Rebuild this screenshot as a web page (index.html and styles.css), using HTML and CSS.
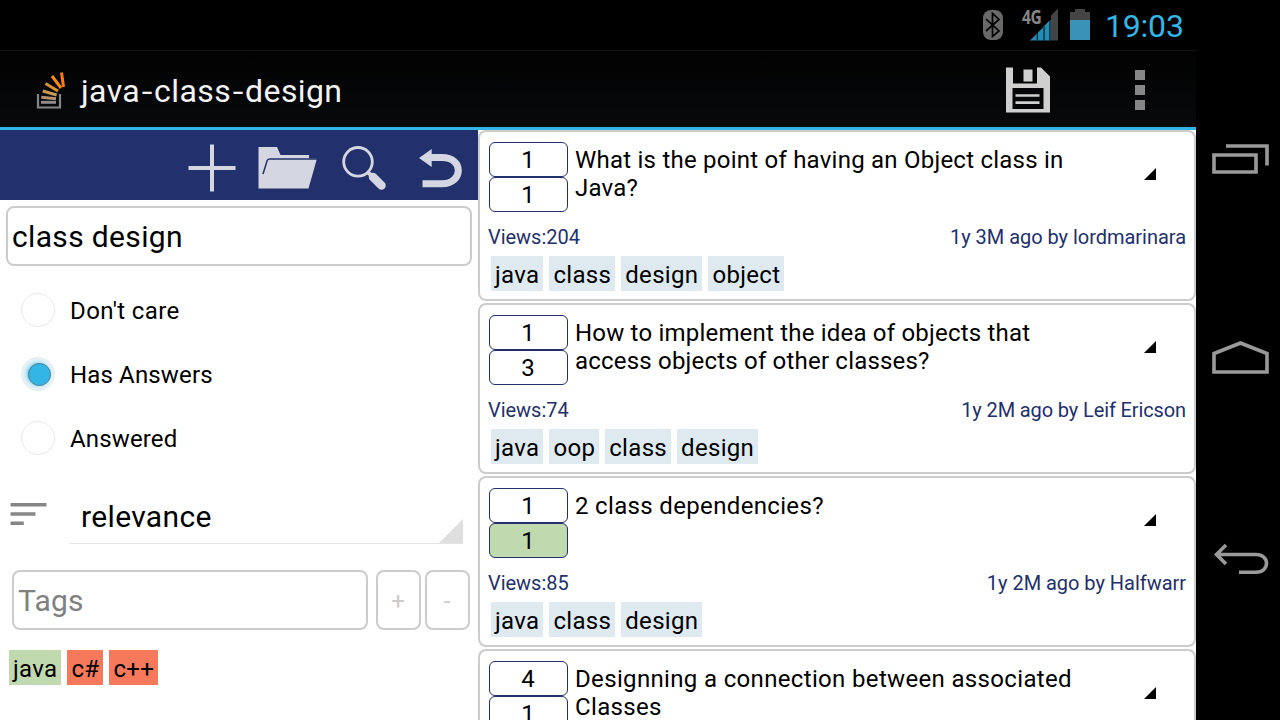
FILE: index.html
```
<!DOCTYPE html>
<html lang="en">
<head>
<meta charset="utf-8">
<title>java-class-design</title>
<link rel="stylesheet" href="styles.css">
</head>
<body>
<div class="device">
  <div class="screen">
    <div class="status-bar">
      <svg class="status-icons" width="112" height="50" viewBox="980 0 112 50">
        <rect x="983" y="10" width="20" height="30" rx="8" fill="#696969"/>
        <path d="M986 19l13 12-6.500 5.500v-23l6.500 6-13 11.500" fill="none" stroke="#000" stroke-width="1.700"/>
        <path d="M1030 40.500l7-7v7zM1038 40.500v-8l5-5v13zM1044.500 40.500v-15l5-5v20z" fill="#258bb5"/>
        <path d="M1051 40.500v-25l7-7v32z" fill="#444"/>
        <path d="M1037 33v7.500M1043.500 26v14.500M1050.500 20v20.500" stroke="#174a60" stroke-width="1"/>
        <path d="M1070 20v-8h5V9h10v3h5v8z" fill="#444"/>
        <rect x="1070" y="20" width="20" height="20" fill="#3993b8"/>
      </svg>
      <span class="network">4G</span>
      <span class="clock">19:03</span>
    </div>
    <header class="action-bar">
      <svg class="logo" width="30" height="40" viewBox="36 70 30 40">
        <path d="M38 94v13.500h22V94" fill="none" stroke="#858588" stroke-width="2.200"/>
        <g fill="none" stroke-width="3">
          <path d="M41 102.300h15" stroke="#8c8b8b"/>
          <path d="M41.300 97.300l14.700 1.500" stroke="#b19370"/>
          <path d="M42.700 91l14 4" stroke="#c69a50"/>
          <path d="M45.500 83.500l12.500 7.500" stroke="#dc922c"/>
          <path d="M52 76l9 12" stroke="#f58b13"/>
          <path d="M61.500 72.500l2 14.500" stroke="#ff7a15"/>
        </g>
      </svg>
      <h1 class="title">java<span class="hyphen">-</span>class<span class="hyphen">-</span>design</h1>
      <svg class="save" width="44" height="46" viewBox="1006 67 44 46">
        <path d="M1006 67.500h7v16h24v-16h4l9 9v36h-44z" fill="#cfcfcf"/>
        <rect x="1023.500" y="69.500" width="9" height="12" fill="#cfcfcf"/>
        <path d="M1012.500 88h31v21h-31z" fill="#050607"/>
        <path d="M1015.500 95.500h24M1015.500 102.700h24" stroke="#cfcfcf" stroke-width="2.700"/>
      </svg>
      <svg class="overflow" width="10" height="40" viewBox="0 0 10 40">
        <path d="M0 0h10v10H0zM0 15h10v10H0zM0 30h10v10H0z" fill="#868686"/>
      </svg>
    </header>
    <main class="content">
      <section class="search">
        <div class="toolbar">
          <svg width="290" height="70" viewBox="188 130 290 70">
            <path d="M188.500 168h47M212 144.500v47" stroke="#d4d6e2" stroke-width="4"/>
            <path d="M258.500 147h18.500l3.500 8h28.500v3.500h8l-8.500 30h-50z" fill="#d4d6e2"/>
            <path d="M263 174l4-13q.6-2 2.500-2h47.500" fill="none" stroke="#22306b" stroke-width="1.500"/>
            <circle cx="358" cy="161.800" r="14.300" fill="none" stroke="#d4d6e2" stroke-width="2.800"/>
            <path d="M367 171.500l5 4.500" stroke="#d4d6e2" stroke-width="4"/>
            <path d="M373 177l8.500 8.500" stroke="#d4d6e2" stroke-width="8.500" stroke-linecap="round"/>
            <path d="M422.500 183.700h19.500c21.300 0 22.300-26.200 0-26.200h-12" fill="none" stroke="#d4d6e2" stroke-width="7"/>
            <path d="M419 158l12.700-9v18z" fill="#d4d6e2"/>
          </svg>
        </div>
        <div class="query">class design</div>
        <div class="radios">
          <div class="radio"><span class="dot"></span><span class="label airy">Don't care</span></div>
          <div class="radio"><span class="dot checked"></span><span class="label">Has Answers</span></div>
          <div class="radio"><span class="dot"></span><span class="label">Answered</span></div>
        </div>
        <div class="sort">
          <svg class="sort-icon" width="38" height="25" viewBox="9 501 38 25">
            <path d="M10.500 504.700h36M10.500 514h25M10.500 523.300h13.300" stroke="#868686" stroke-width="3.600"/>
          </svg>
          <div class="spinner"><span>relevance</span><i class="spinner-corner"></i></div>
        </div>
        <div class="tag-form">
          <div class="tag-input">Tags</div>
          <div class="tag-button">+</div>
          <div class="tag-button">-</div>
        </div>
        <div class="tags picked">
          <span class="tag included">java</span><span class="tag excluded">c#</span><span class="tag excluded">c++</span>
        </div>
      </section>
      <section class="results">
        <article class="card">
          <div class="card-top">
            <div class="counts"><span class="count">1</span><span class="count">1</span></div>
            <h2 class="question">What is the point of having an Object class in<br>Java?</h2>
            <i class="corner"></i>
          </div>
          <div class="meta"><span>Views:204</span><span>1y 3M ago by lordmarinara</span></div>
          <div class="tags"><span class="tag">java</span><span class="tag">class</span><span class="tag">design</span><span class="tag">object</span></div>
        </article>
        <article class="card">
          <div class="card-top">
            <div class="counts"><span class="count">1</span><span class="count">3</span></div>
            <h2 class="question tight">How to implement the idea of objects that<br>access objects of other classes?</h2>
            <i class="corner"></i>
          </div>
          <div class="meta"><span>Views:74</span><span class="tight-meta">1y 2M ago by Leif Ericson</span></div>
          <div class="tags"><span class="tag">java</span><span class="tag">oop</span><span class="tag">class</span><span class="tag">design</span></div>
        </article>
        <article class="card">
          <div class="card-top">
            <div class="counts"><span class="count">1</span><span class="count accepted">1</span></div>
            <h2 class="question loose">2 class dependencies?</h2>
            <i class="corner"></i>
          </div>
          <div class="meta"><span>Views:85</span><span>1y 2M ago by Halfwarr</span></div>
          <div class="tags"><span class="tag">java</span><span class="tag">class</span><span class="tag">design</span></div>
        </article>
        <article class="card">
          <div class="card-top">
            <div class="counts"><span class="count">4</span><span class="count">1</span></div>
            <h2 class="question loose">Designning a connection between associated<br>Classes</h2>
            <i class="corner"></i>
          </div>
        </article>
      </section>
    </main>
  </div>
  <nav class="nav-bar">
    <svg width="84" height="720" viewBox="1196 0 84 720" fill="none" stroke="#999" stroke-width="3.600">
      <path d="M1214 155h42v17h-42zM1226 146h41v19.500"/>
      <path d="M1214 353.500v18.500h53v-18.500l-26.500-10.500z"/>
      <path d="M1217 554.500h39c14 0 14 17.700 0 17.700h-17M1226 545l-9.500 9.500 9.500 9.500"/>
    </svg>
  </nav>
</div>
</body>
</html>
```
FILE: styles.css
```
* { box-sizing: border-box; }
body { margin: 0; background: #000; font-family: Roboto, sans-serif; color: #000; overflow: hidden; }
svg { display: block; flex: none; }
h1, h2 { margin: 0; font-weight: 400; }
.device { display: flex; width: 1280px; height: 720px; overflow: hidden; }
.screen { width: 1196px; display: flex; flex-direction: column; flex: none; }
.nav-bar { width: 84px; background: #000; }

.status-bar { position: relative; height: 50px; flex: none; display: flex; justify-content: flex-end; padding-right: 12px; }
.network { position: absolute; left: 1022px; top: 8px; font: 700 19px/19px "Open Sans", sans-serif; letter-spacing: -0.6px; color: #868686; transform: scaleX(.82); transform-origin: left; }
.clock { width: 92px; padding-left: 13px; font-size: 32px; line-height: 52px; letter-spacing: -0.2px; color: #33b5e5; white-space: nowrap; }

.action-bar { height: 80px; flex: none; display: flex; align-items: center; border-top: 1px solid #151515; border-bottom: 3px solid #33b5e5; background: linear-gradient(#020202, #07090b); padding: 1px 51px 0 36px; }
.title { margin-left: 15px; flex: 1; font-size: 32px; line-height: 40px; padding-top: 2px; letter-spacing: .4px; color: #f3f3f3; }
.hyphen { display: inline-block; width: 14px; text-align: center; letter-spacing: 0; transform: scaleX(1.2); }
.overflow { margin-left: 85px; }

.content { display: flex; height: 590px; background: #fff; }
.search { width: 478px; flex: none; }
.toolbar { height: 70px; background: #22306b; display: flex; justify-content: flex-end; }
.query { margin: 6px 6px 0; height: 60px; border: 2px solid #ccc; border-radius: 8px; padding-left: 4px; font-size: 30px; line-height: 58px; letter-spacing: .35px; }
.radios { padding: 12px 0 0 21px; }
.radio { display: flex; align-items: center; gap: 15px; height: 64px; font-size: 24px; letter-spacing: .15px; }
.label { padding-top: 2px; }
.airy { letter-spacing: .4px; }
.dot { position: relative; width: 34px; height: 34px; margin-bottom: 1px; border: 1px solid #e8e8e8; border-radius: 50%; }
.checked { background: radial-gradient(circle closest-side, #72cbed 58%, #c9eaf7 78%, #eef5f8 100%); }
.checked::after { content: ""; position: absolute; left: 5.5px; top: 5.5px; width: 21px; height: 21px; border-radius: 50%; border: 1px solid #4f7f91; background: #33b5e5; }
.sort { display: flex; padding: 22px 15px 0 9px; }
.sort-icon { margin-top: 9px; }
.spinner { position: relative; margin-left: 23px; flex: 1; height: 52px; border-bottom: 1px solid #e4e4e4; padding-left: 11px; font-size: 30px; line-height: 50px; letter-spacing: .35px; }
.spinner-corner { position: absolute; right: 0; bottom: 0; width: 24px; height: 24px; background: #dfdfdf; clip-path: polygon(100% 0, 100% 100%, 0 100%); }
.tag-form { display: flex; margin: 26px 8px 0 12px; height: 60px; }
.tag-input { width: 356px; margin-right: 8px; border: 2px solid #ccc; border-radius: 8px; padding-left: 4px; font-size: 30px; line-height: 58px; letter-spacing: .2px; color: #808080; }
.tag-button { width: 45px; border: 2px solid #ccc; border-radius: 8px; text-align: center; font-size: 24px; line-height: 58px; padding-right: 1px; color: #ccc; }
.tag-button + .tag-button { margin-left: 4px; }
.tags { display: flex; gap: 6px; }
.tag { height: 35px; padding: 1px 4px 0; font-size: 24px; line-height: 37px; letter-spacing: .32px; background: #dfe9f0; white-space: nowrap; }
.picked { margin: 20px 0 0 9px; }
.included, .accepted { background: #c0d9af; }
.excluded { background: #f6795b; }

.results { width: 718px; flex: none; display: flex; flex-direction: column; gap: 2px; overflow: hidden; }
.card { height: 171px; flex: none; border: 2px solid #ccc; border-radius: 8px; padding: 10px 8px 0 9px; }
.card-top { display: flex; height: 71px; }
.counts { width: 79px; flex: none; }
.count { display: block; height: 35px; border: 1px solid #22306b; border-radius: 6px; text-align: center; font-size: 24px; line-height: 35px; padding-right: 1px; }
.question { width: 562px; margin-left: 7px; font-size: 24px; line-height: 28px; padding-top: 4px; letter-spacing: .23px; white-space: nowrap; }
.tight { letter-spacing: .2px; }
.loose { letter-spacing: .34px; }
.corner { margin: 26px 0 0 7px; width: 12px; height: 12px; background: #000; clip-path: polygon(100% 0, 100% 100%, 0 100%); }
.meta { display: flex; justify-content: space-between; margin-left: -1px; height: 43px; padding-top: 12px; font-size: 20px; line-height: 25px; letter-spacing: -.03px; color: #22306b; }
.tight-meta { letter-spacing: -.12px; }
.card .tags { margin-left: 2px; }
```
